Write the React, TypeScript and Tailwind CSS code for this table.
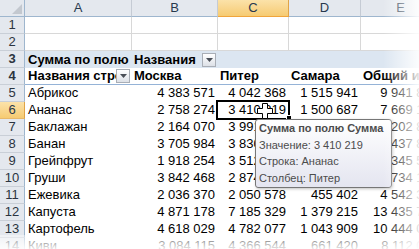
import React from 'react';

type Row = {
  n: number;
  a: string;
  b: string;
  c: string;
  d: string;
  e: string;
};

const rows: Row[] = [
  { n: 5, a: 'Абрикос', b: '4 383 571', c: '4 042 368', d: '1 515 941', e: '9 941 880' },
  { n: 6, a: 'Ананас', b: '2 758 274', c: '3 410 219', d: '1 500 687', e: '7 669 180' },
  { n: 7, a: 'Баклажан', b: '2 164 070', c: '3 991 448', d: '1 047 327', e: '7 202 845' },
  { n: 8, a: 'Банан', b: '3 705 984', c: '3 830 553', d: '901 298', e: '8 437 835' },
  { n: 9, a: 'Грейпфрут', b: '1 918 254', c: '3 512 740', d: '914 515', e: '6 345 509' },
  { n: 10, a: 'Груши', b: '3 842 468', c: '2 874 309', d: '1 017 344', e: '7 734 121' },
  { n: 11, a: 'Ежевика', b: '2 036 370', c: '2 050 578', d: '455 402', e: '4 542 350' },
  { n: 12, a: 'Капуста', b: '4 871 178', c: '7 185 329', d: '1 379 215', e: '13 435 722' },
  { n: 13, a: 'Картофель', b: '4 618 029', c: '4 782 077', d: '1 043 909', e: '10 444 015' },
  { n: 14, a: 'Киви', b: '3 084 115', c: '4 366 544', d: '661 420', e: '8 112 079' },
];

function DropButton() {
  return (
    <div className="mr-[2px] flex h-[14px] w-[14px] shrink-0 items-center justify-center border border-[#a9aeb6] bg-linear-to-b from-white to-[#dde1e7]">
      <svg width="7" height="4" viewBox="0 0 7 4">
        <path d="M0 0H7L3.5 4Z" fill="#4a4f57" />
      </svg>
    </div>
  );
}

function RowNum({ n, active }: { n: number; active?: boolean }) {
  return (
    <div
      className={
        active
          ? 'flex w-[25px] shrink-0 items-center justify-center border-r border-b border-r-[#e0a447] border-b-[#e8b96a] bg-linear-to-b from-[#fbe2a9] to-[#f6cb72] text-[#27384d]'
          : 'flex w-[25px] shrink-0 items-center justify-center border-r border-b border-r-[#9eb6ce] border-b-[#c9cfd7] bg-[#e4e8ee] text-[#2b3440]'
      }
    >
      {n}
    </div>
  );
}

function HeaderRow() {
  const letters = [
    { l: 'A', w: 'w-[107px]' },
    { l: 'B', w: 'w-[86px]' },
    { l: 'C', w: 'w-[71px]' },
    { l: 'D', w: 'w-[72px]' },
    { l: 'E', w: 'w-[80px]' },
  ];
  return (
    <div className="flex h-[17px]">
      <div className="relative w-[25px] shrink-0 border-r border-b border-[#9eb6ce] bg-[#e4e8ee]">
        <svg className="absolute right-[2px] bottom-[2px]" width="10" height="10" viewBox="0 0 10 10">
          <path d="M10 0V10H0Z" fill="#c3c8cf" />
        </svg>
      </div>
      {letters.map((c) =>
        c.l === 'C' ? (
          <div
            key={c.l}
            className={`${c.w} shrink-0 border-r border-b border-r-[#e0a447] border-b-[#f0a53c] bg-linear-to-b from-[#fbe2a9] to-[#f6cb72] text-center text-[#27384d]`}
          >
            {c.l}
          </div>
        ) : (
          <div
            key={c.l}
            className={`${c.w} shrink-0 border-r border-b border-r-[#c5cbd4] border-b-[#9eb6ce] bg-[#e4e8ee] text-center text-[#27384d]`}
          >
            {c.l}
          </div>
        )
      )}
    </div>
  );
}

function EmptyRow({ n }: { n: number }) {
  return (
    <div className="flex h-[17px]">
      <RowNum n={n} />
      <div className="w-[107px] shrink-0 border-r border-b border-[#d8d8d8]" />
      <div className="w-[86px] shrink-0 border-r border-b border-[#d8d8d8]" />
      <div className="w-[71px] shrink-0 border-r border-b border-[#d8d8d8]" />
      <div className="w-[72px] shrink-0 border-r border-b border-[#d8d8d8]" />
      <div className="w-[80px] shrink-0 border-r border-b border-[#d8d8d8]" />
    </div>
  );
}

export default function App() {
  return (
    <div className="relative h-[249px] w-[419px] overflow-hidden bg-white font-['Liberation_Sans',Arial,sans-serif] text-[13px] leading-[16px] text-black">
      <HeaderRow />
      <EmptyRow n={1} />
      <EmptyRow n={2} />

      {/* pivot: filter row */}
      <div className="flex h-[17px] font-bold">
        <RowNum n={3} />
        <div className="flex w-[107px] shrink-0 items-center overflow-hidden whitespace-nowrap bg-[#dce6f1] pl-[3px]">
          Сумма по полю Сумма
        </div>
        <div className="flex w-[86px] shrink-0 items-center gap-[4px] bg-[#dce6f1] pl-[2px]">
          <span className="flex-1 overflow-hidden whitespace-nowrap">Названия столбцов</span>
          <DropButton />
        </div>
        <div className="w-[71px] shrink-0 bg-[#dce6f1]" />
        <div className="w-[72px] shrink-0 bg-[#dce6f1]" />
        <div className="w-[80px] shrink-0 bg-[#dce6f1]" />
      </div>

      {/* pivot: column captions */}
      <div className="flex h-[17px] font-bold">
        <RowNum n={4} />
        <div className="flex w-[107px] shrink-0 items-center border-b border-[#95b3d7] pl-[3px]">
          <span className="flex-1 overflow-hidden whitespace-nowrap">Названия строк</span>
          <DropButton />
        </div>
        <div className="w-[86px] shrink-0 border-b border-[#95b3d7] pl-[2px]">Москва</div>
        <div className="w-[71px] shrink-0 border-b border-[#95b3d7] pl-[2px]">Питер</div>
        <div className="w-[72px] shrink-0 border-b border-[#95b3d7] pl-[2px]">Самара</div>
        <div className="w-[80px] shrink-0 overflow-hidden whitespace-nowrap border-b border-[#95b3d7] pl-[2px]">
          Общий итог
        </div>
      </div>

      {rows.map((r) => (
        <div key={r.n} className="flex h-[17px]">
          <RowNum n={r.n} active={r.n === 6} />
          <div className="w-[107px] shrink-0 overflow-hidden whitespace-nowrap pl-[3px]">{r.a}</div>
          <div className="w-[86px] shrink-0 pr-[3px] text-right">{r.b}</div>
          <div className="w-[71px] shrink-0 pr-[3px] text-right">{r.c}</div>
          <div className="w-[72px] shrink-0 pr-[3px] text-right">{r.d}</div>
          <div className="w-[80px] shrink-0 whitespace-nowrap pr-[3px] text-right">{r.e}</div>
        </div>
      ))}

      {/* active cell C6 */}
      <div className="absolute top-[100px] left-[216px] h-[20px] w-[74px] border-2 border-black" />
      <div className="absolute top-[115px] left-[286px] h-[6px] w-[6px] border border-white bg-black" />

      {/* tooltip */}
      <div className="absolute top-[119px] left-[255px] h-[69px] w-[137px] whitespace-nowrap rounded-[3px] border border-[#767676] bg-linear-to-b from-white to-[#e4e5f0] pl-[3px] text-[11px] leading-[16.5px] text-[#4c4c4c] shadow-[1px_1px_3px_rgba(0,0,0,0.25)]">
        <div className="font-bold">Сумма по полю Сумма</div>
        <div>Значение: 3 410 219</div>
        <div>Строка: Ананас</div>
        <div>Столбец: Питер</div>
      </div>

      {/* mouse cursor */}
      <svg className="absolute top-[103px] left-[257px]" width="16" height="16" viewBox="0 0 16 16">
        <path d="M5.5 0.5H10.5V5.5H15.5V10.5H10.5V15.5H5.5V10.5H0.5V5.5H5.5Z" fill="white" stroke="black" />
      </svg>

      {/* fades */}
      <div className="pointer-events-none absolute top-0 right-0 h-full w-[36px] bg-linear-to-r from-white/0 to-white/90" />
      <div className="pointer-events-none absolute bottom-0 left-0 h-[14px] w-full bg-linear-to-b from-white/40 to-white/90" />
    </div>
  );
}
